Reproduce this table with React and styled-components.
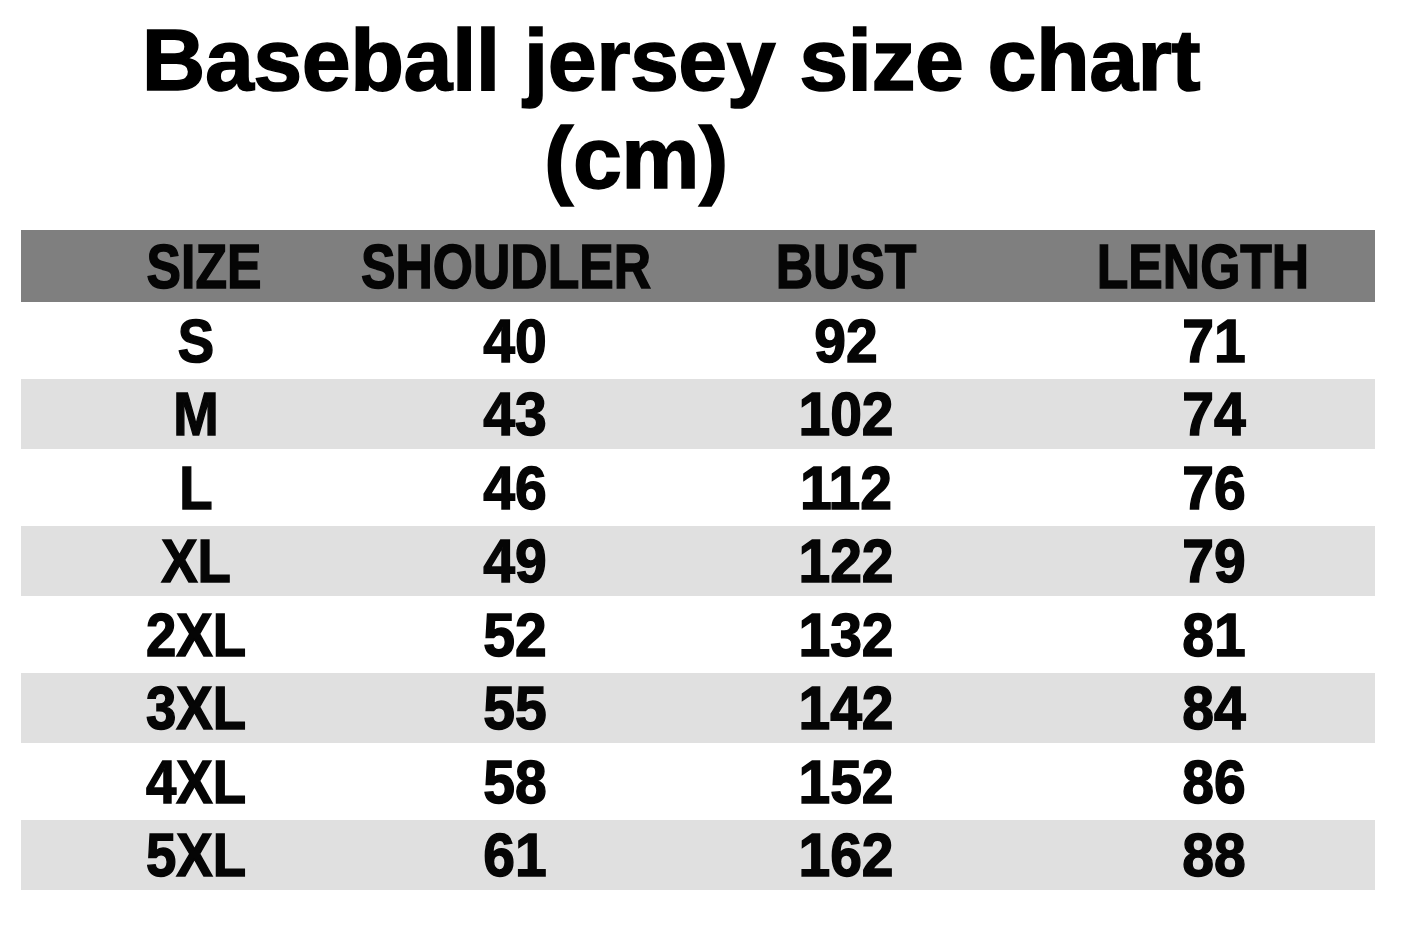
import React from 'react'
import styled, { createGlobalStyle } from 'styled-components'

const GlobalStyle = createGlobalStyle`
  html,
  body {
    margin: 0;
    padding: 0;
    background: #fff;
  }

  body {
    font-family: 'Liberation Sans', Arial, sans-serif;
    color: #000;
  }
`

const Page = styled.div`
  width: 1416px;
  height: 926px;
  padding-top: 11px;
  box-sizing: border-box;
  overflow: hidden;
`

const Title = styled.h1`
  margin: 0 74px 23px 0;
  font-family: 'Liberation Sans', Arial, sans-serif;
  font-size: 88px;
  line-height: 98px;
  font-weight: 700;
  text-align: center;
  letter-spacing: -0.5px;
  -webkit-text-stroke: 1.5px #000;
`

const Unit = styled.span`
  display: block;
  padding-right: 70px;
`

const Table = styled.div`
  margin: 0 41px 0 21px;
  display: flex;
  flex-direction: column;
`

const Row = styled.div`
  display: grid;
  grid-template-columns: 358px 266px 402px 328px;
  align-items: center;
  height: ${(p) => p.$height}px;
  background: ${(p) => p.$bg};
`

// condensed bold, squeezed from Liberation Sans Bold
const Condensed = styled.div`
  display: flex;
  justify-content: center;
  font-family: 'Liberation Sans', Arial, sans-serif;
  font-weight: 700;
  line-height: 1;
  color: #050505;
  -webkit-text-stroke: 1.5px #050505;
  white-space: nowrap;
`

const HeadCell = styled(Condensed)`
  font-size: 63px;
  transform: translateX(${(p) => p.$shift || 0}px) scaleX(0.82);
`

const SizeCell = styled(Condensed)`
  font-size: 62px;
  transform: translateX(-4px) scaleX(0.88);
`

const ValueCell = styled(Condensed)`
  font-size: 62px;
  transform: translateX(${(p) => p.$shift || 0}px) scaleX(0.92);
`

const rows = [
  ['S', 40, 92, 71],
  ['M', 43, 102, 74],
  ['L', 46, 112, 76],
  ['XL', 49, 122, 79],
  ['2XL', 52, 132, 81],
  ['3XL', 55, 142, 84],
  ['4XL', 58, 152, 86],
  ['5XL', 61, 162, 88],
]

export default function App() {
  return (
    <Page>
      <GlobalStyle />
      <Title>
        Baseball jersey size chart
        <Unit>(cm)</Unit>
      </Title>
      <Table>
        <Row $height={72} $bg="#7f7f7f">
          <HeadCell $shift={4}>SIZE</HeadCell>
          <HeadCell $shift={-6}>SHOUDLER</HeadCell>
          <HeadCell>BUST</HeadCell>
          <HeadCell $shift={-8}>LENGTH</HeadCell>
        </Row>
        {rows.map(([size, shoulder, bust, length], i) => (
          <Row
            key={size}
            $height={i % 2 === 0 ? 77 : 70}
            $bg={i % 2 === 0 ? '#fff' : '#e0e0e0'}
          >
            <SizeCell>{size}</SizeCell>
            <ValueCell $shift={3}>{shoulder}</ValueCell>
            <ValueCell>{bust}</ValueCell>
            <ValueCell $shift={3}>{length}</ValueCell>
          </Row>
        ))}
      </Table>
    </Page>
  )
}
